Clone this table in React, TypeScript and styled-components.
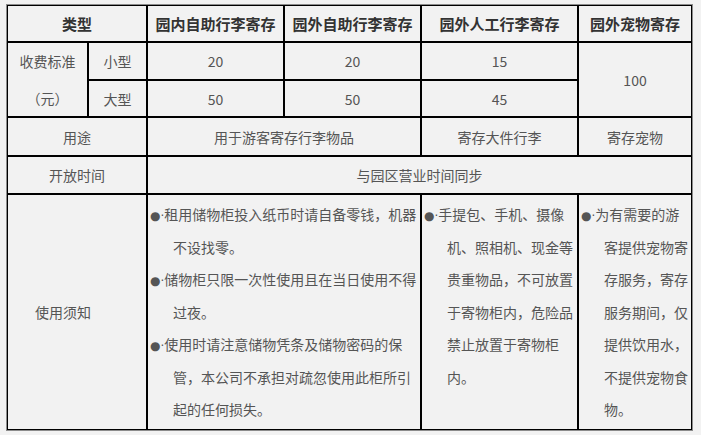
import React from 'react';
import styled, { createGlobalStyle } from 'styled-components';

const Global = createGlobalStyle`
  html, body { margin: 0; padding: 0; background: #f2f2f2; }
  body {
    font-family: "Noto Sans CJK SC", "Noto Sans", sans-serif;
    text-spacing-trim: space-all;
  }
`;

const Page = styled.div`
  padding: 4px 0 0 6px;
`;

const Table = styled.table`
  border-collapse: separate;
  border-spacing: 0;
  table-layout: fixed;
  width: 687px;
  border: 1px solid #8c8c8c;
  background: #f2f2f2;
  color: #555;
  font-size: 14px;
`;

const Col = styled.col<{ $w: number }>`
  width: ${(p) => p.$w}px;
`;

const Row = styled.tr<{ $h?: number }>`
  height: ${(p) => (p.$h ? `${p.$h}px` : 'auto')};
`;

const Cell = styled.td<{ $lh?: number; $pr?: number }>`
  border: 1px solid #000;
  padding: 0 ${(p) => p.$pr ?? 0}px 0 0;
  text-align: center;
  vertical-align: middle;
  line-height: ${(p) => p.$lh ?? 20}px;
  white-space: nowrap;
`;

const HeadCell = styled(Cell).attrs({ as: 'th' })`
  font-size: 15px;
  font-weight: 700;
  color: #333;
`;

const NoteCell = styled.td`
  border: 1px solid #000;
  padding: 3px 0 2px 2px;
  text-align: left;
  vertical-align: top;
  line-height: 32.5px;
  white-space: nowrap;
`;

const Note = styled.p`
  margin: 0;
  padding-left: 23px;
  text-indent: -23px;
`;

const Dot = styled.span`
  font-family: "DejaVu Sans", sans-serif;
  font-size: 12px;
  line-height: 0;
`;

const notes: string[][][] = [
  [
    ['租用储物柜投入纸币时请自备零钱，机器', '不设找零。'],
    ['储物柜只限一次性使用且在当日使用不得', '过夜。'],
    ['使用时请注意储物凭条及储物密码的保', '管，本公司不承担对疏忽使用此柜所引', '起的任何损失。'],
  ],
  [['手提包、手机、摄像', '机、照相机、现金等', '贵重物品，不可放置', '于寄物柜内，危险品', '禁止放置于寄物柜', '内。']],
  [['为有需要的游', '客提供宠物寄', '存服务，寄存', '服务期间，仅', '提供饮用水，', '不提供宠物食', '物。']],
];

function Notes({ paras }: { paras: string[][] }) {
  return (
    <>
      {paras.map((lines, i) => (
        <Note key={i}>
          <Dot>●·</Dot>
          {lines.map((l, j) => (
            <React.Fragment key={j}>
              {j > 0 && <br />}
              {l}
            </React.Fragment>
          ))}
        </Note>
      ))}
    </>
  );
}

export default function App() {
  return (
    <>
      <Global />
      <Page>
        <Table>
          <colgroup>
            <Col $w={81} />
            <Col $w={59} />
            <Col $w={137} />
            <Col $w={137} />
            <Col $w={157} />
            <Col $w={114} />
          </colgroup>
          <tbody>
            <Row $h={37}>
              <HeadCell colSpan={2}>类型</HeadCell>
              <HeadCell>园内自助行李寄存</HeadCell>
              <HeadCell>园外自助行李寄存</HeadCell>
              <HeadCell>园外人工行李寄存</HeadCell>
              <HeadCell>园外宠物寄存</HeadCell>
            </Row>
            <Row $h={38}>
              <Cell rowSpan={2} $lh={36.5}>
                收费标准
                <br />
                （元）
              </Cell>
              <Cell>小型</Cell>
              <Cell>20</Cell>
              <Cell>20</Cell>
              <Cell>15</Cell>
              <Cell rowSpan={2}>100</Cell>
            </Row>
            <Row $h={37}>
              <Cell>大型</Cell>
              <Cell>50</Cell>
              <Cell>50</Cell>
              <Cell>45</Cell>
            </Row>
            <Row $h={39}>
              <Cell colSpan={2}>用途</Cell>
              <Cell colSpan={2}>用于游客寄存行李物品</Cell>
              <Cell>寄存大件行李</Cell>
              <Cell>寄存宠物</Cell>
            </Row>
            <Row $h={38}>
              <Cell colSpan={2}>开放时间</Cell>
              <Cell colSpan={4}>与园区营业时间同步</Cell>
            </Row>
            <Row $h={236}>
              <Cell colSpan={2} $pr={28}>使用须知</Cell>
              <NoteCell colSpan={2}>
                <Notes paras={notes[0]} />
              </NoteCell>
              <NoteCell>
                <Notes paras={notes[1]} />
              </NoteCell>
              <NoteCell>
                <Notes paras={notes[2]} />
              </NoteCell>
            </Row>
          </tbody>
        </Table>
      </Page>
    </>
  );
}
